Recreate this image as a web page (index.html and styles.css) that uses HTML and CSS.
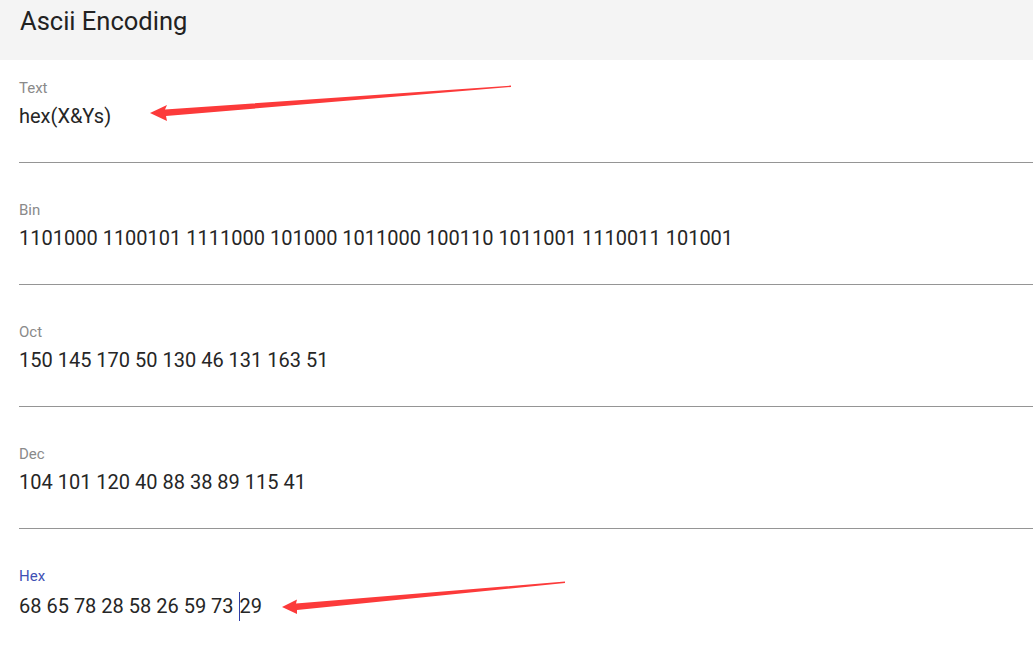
FILE: index.html
```html
<!DOCTYPE html>
<html>
<head>
<meta charset="utf-8">
<link rel="stylesheet" href="styles.css">
</head>
<body>
<div class="page">
  <header class="header"><h1 class="title">Ascii Encoding</h1></header>
  <main class="fields">
    <div class="field">
      <div class="label">Text</div>
      <div class="value">hex(X&amp;Ys)</div>
    </div>
    <div class="field">
      <div class="label">Bin</div>
      <div class="value">1101000 1100101 1111000 101000 1011000 100110 1011001 1110011 101001</div>
    </div>
    <div class="field">
      <div class="label">Oct</div>
      <div class="value">150 145 170 50 130 46 131 163 51</div>
    </div>
    <div class="field">
      <div class="label">Dec</div>
      <div class="value">104 101 120 40 88 38 89 115 41</div>
    </div>
    <div class="field field-focused">
      <div class="label">Hex</div>
      <div class="value">68 65 78 28 58 26 59 73 <span class="caret"></span>29</div>
    </div>
  </main>
  <svg class="annotations" width="1033" height="648" viewBox="0 0 1033 648">
    <polygon fill="#fc3a3a" points="150,113 167,105 165,109.5 511,85.6 511,87 166,116 167,121"/>
    <polygon fill="#fc3a3a" points="282,607 297,599.5 296,603.5 565,581.5 565,583 297,610 297,614"/>
  </svg>
</div>
</body>
</html>
```

FILE: styles.css
```css
html, body {
  margin: 0;
  padding: 0;
  background: #ffffff;
}
body {
  font-family: Roboto, "Noto Sans", "Liberation Sans", sans-serif;
  color: #212121;
  overflow: hidden;
}
.page {
  position: relative;
  width: 1033px;
  height: 648px;
  overflow: hidden;
}
.header {
  height: 60px;
  background: #f4f4f4;
  padding-left: 20px;
  display: flex;
  align-items: flex-start;
  box-sizing: border-box;
}
.title {
  margin: 0;
  margin-top: 5px;
  font-size: 25.5px;
  font-weight: 400;
  line-height: 32px;
  color: #222222;
}
.fields {
  padding-left: 19px;
  display: flex;
  flex-direction: column;
  gap: 19px;
}
.field {
  padding-top: 19px;
  padding-bottom: 34px;
  border-bottom: 1px solid #959595;
}
.label {
  font-size: 15px;
  line-height: 18px;
  color: #8a8a8a;
}
.field-focused .label {
  color: #3f51b5;
}
.value {
  margin-top: 7px;
  font-size: 20px;
  line-height: 24px;
  color: #262626;
  white-space: nowrap;
}
.caret {
  display: inline-block;
  width: 1px;
  height: 29px;
  background: #2f3fa8;
  vertical-align: -8px;
}
.annotations {
  position: absolute;
  left: 0;
  top: 0;
  pointer-events: none;
}
```
